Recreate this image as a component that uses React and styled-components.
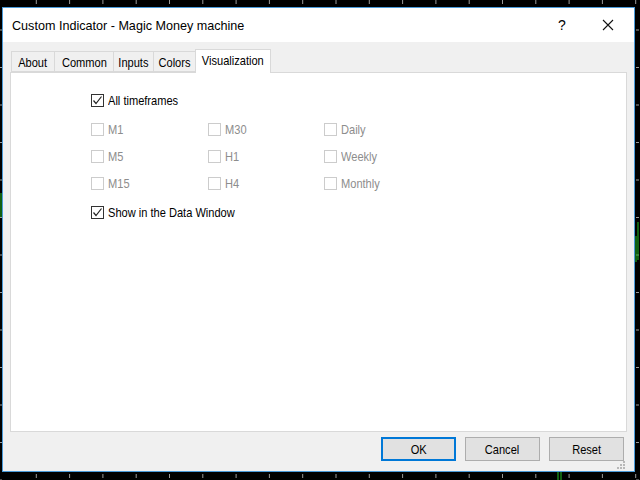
import React from "react";
import styled, { createGlobalStyle } from "styled-components";

const Global = createGlobalStyle`
  html, body { margin: 0; padding: 0; background: #000; }
  * { box-sizing: border-box; }
`;

const UI_FONT = `"Liberation Sans", Arial, sans-serif`;

const Screen = styled.div`
  position: relative;
  width: 640px;
  height: 480px;
  background: #000;
  overflow: hidden;
`;

const ChartLayer = styled.svg`
  position: absolute;
  left: 0;
  top: 0;
  width: 640px;
  height: 480px;
`;

const Dialog = styled.div`
  position: absolute;
  left: 2px;
  top: 7px;
  width: 633px;
  height: 465px;
  border: 1px solid #4a9ad8;
  background: #f0f0f0;
  display: flex;
  flex-direction: column;
`;

const TitleBar = styled.div`
  height: 34px;
  flex: none;
  background: #fff;
  display: flex;
  align-items: center;
  padding-left: 9px;
  padding-right: 3px;
`;

const Title = styled.div`
  flex: 1;
  font-family: ${UI_FONT};
  font-size: 12.6px;
  color: #000;
  padding-top: 1px;
`;

const TitleButton = styled.div`
  width: 46px;
  height: 34px;
  display: flex;
  align-items: center;
  justify-content: center;
  font-family: ${UI_FONT};
  font-size: 14px;
  color: #000;
`;

/* Narrow UI text: the reference uses a condensed face */
const Narrow = styled.span`
  display: inline-block;
  white-space: nowrap;
  font-family: ${UI_FONT};
  font-size: 13.5px;
  transform: scaleX(0.82);
  transform-origin: ${(p) => p.$origin || "center"};
`;

const Body = styled.div`
  flex: 1;
  display: flex;
  flex-direction: column;
  padding: 7px 7px 0 7px;
`;

const TabRow = styled.div`
  display: flex;
  align-items: flex-end;
  height: 23px;
  padding-left: 1px;
  position: relative;
  z-index: 1;
`;

const Tab = styled.div`
  width: ${(p) => p.$w}px;
  height: ${(p) => (p.$active ? 24 : 21)}px;
  margin-bottom: ${(p) => (p.$active ? -1 : 0)}px;
  margin-left: ${(p) => (p.$first ? 0 : -1)}px;
  border: 1px solid #d9d9d9;
  border-bottom: ${(p) => (p.$active ? "none" : "1px solid #d9d9d9")};
  background: ${(p) => (p.$active ? "#fff" : "#f0f0f0")};
  display: flex;
  justify-content: center;
  align-items: ${(p) => (p.$active ? "flex-start" : "center")};
  padding-top: ${(p) => (p.$active ? 3 : 2)}px;
  color: #000;
  position: relative;
  z-index: ${(p) => (p.$active ? 2 : 1)};
`;

const Panel = styled.div`
  height: 360px;
  flex: none;
  background: #fff;
  border: 1px solid #d9d9d9;
  padding: 14px 0 0 80px;
`;

const OptionRow = styled.label`
  height: 27px;
  display: flex;
  align-items: center;
  margin-top: ${(p) => p.$mt || 0}px;
  color: ${(p) => (p.$disabled ? "#8d8d8d" : "#000")};
`;

const Grid = styled.div`
  display: grid;
  grid-template-columns: 117px 116px 120px;
  grid-auto-rows: 27px;
  margin-top: 2px;
`;

const Box = styled.span`
  width: 13px;
  height: 13px;
  flex: none;
  border: 1px solid ${(p) => (p.$disabled ? "#cccccc" : "#333333")};
  background: #fff;
  display: flex;
  align-items: center;
  justify-content: center;
  margin-right: 4px;
`;

const Footer = styled.div`
  flex: 1;
  display: flex;
  justify-content: flex-end;
  align-items: flex-start;
  gap: 9px;
  padding: 5px 3px 0 0;
  position: relative;
`;

const Button = styled.div`
  width: 75px;
  height: 24px;
  background: #e1e1e1;
  border: ${(p) => (p.$default ? "2px solid #0078d7" : "1px solid #adadad")};
  display: flex;
  align-items: center;
  justify-content: center;
  color: #000;
`;

const Grip = styled.svg`
  position: absolute;
  right: 1px;
  bottom: 1px;
  width: 10px;
  height: 10px;
`;

function Check({ checked, disabled }) {
  return (
    <Box $disabled={disabled}>
      {checked && (
        <svg width="11" height="11" viewBox="0 0 11 11">
          <polyline
            points="1.5,5.5 4,8.5 9.5,1.5"
            fill="none"
            stroke="#222"
            strokeWidth="1.2"
          />
        </svg>
      )}
    </Box>
  );
}

function Option({ label, checked, disabled, mt }) {
  return (
    <OptionRow $disabled={disabled} $mt={mt}>
      <Check checked={checked} disabled={disabled} />
      <Narrow $origin="left center">{label}</Narrow>
    </OptionRow>
  );
}

function Chart() {
  const topTicks = [];
  for (let k = 1; k < 20; k++) topTicks.push(3 + 33.3 * k);
  const sideTicks = [];
  for (let k = 0; k < 13; k++) sideTicks.push(30 + 37.5 * k);
  return (
    <ChartLayer viewBox="0 0 640 480">
      {topTicks.map((x, i) => (
        <g key={i} stroke="#9a9a9a" strokeWidth="1">
          <line x1={x} y1="0" x2={x} y2="4" />
          <line x1={x} y1="474" x2={x} y2="478" />
        </g>
      ))}
      {sideTicks.map((y, i) => (
        <g key={i} stroke="#9a9a9a" strokeWidth="1">
          <line x1="0" y1={y} x2="2" y2={y} />
          <line x1="636" y1={y} x2="639" y2={y} />
        </g>
      ))}
      <g stroke="#22c022" strokeWidth="1">
        <line x1="1" y1="193" x2="1" y2="217" />
        <line x1="638" y1="222" x2="638" y2="260" />
        <line x1="636" y1="236" x2="636" y2="262" />
        <line x1="558" y1="472" x2="558" y2="480" />
        <line x1="561" y1="472" x2="561" y2="480" />
      </g>
    </ChartLayer>
  );
}

const TABS = [
  { label: "About", w: 44 },
  { label: "Common", w: 60 },
  { label: "Inputs", w: 41 },
  { label: "Colors", w: 43 },
  { label: "Visualization", w: 76, active: true },
];

const GRID = ["M1", "M30", "Daily", "M5", "H1", "Weekly", "M15", "H4", "Monthly"];

export default function App() {
  return (
    <Screen>
      <Global />
      <Chart />
      <Dialog>
        <TitleBar>
          <Title>Custom Indicator - Magic Money machine</Title>
          <TitleButton>?</TitleButton>
          <TitleButton>
            <svg width="12" height="12" viewBox="0 0 12 12">
              <path d="M1 1 L11 11 M11 1 L1 11" stroke="#111" strokeWidth="1.1" />
            </svg>
          </TitleButton>
        </TitleBar>
        <Body>
          <TabRow>
            {TABS.map((t, i) => (
              <Tab key={t.label} $w={t.w} $active={t.active} $first={i === 0}>
                <Narrow>{t.label}</Narrow>
              </Tab>
            ))}
          </TabRow>
          <Panel>
            <Option label="All timeframes" checked />
            <Grid>
              {GRID.map((g) => (
                <Option key={g} label={g} disabled />
              ))}
            </Grid>
            <Option label="Show in the Data Window" checked mt={2} />
          </Panel>
          <Footer>
            <Button $default><Narrow>OK</Narrow></Button>
            <Button><Narrow>Cancel</Narrow></Button>
            <Button><Narrow>Reset</Narrow></Button>
            <Grip viewBox="0 0 10 10">
              {[
                [8, 2], [8, 5], [8, 8], [5, 5], [5, 8], [2, 8],
              ].map(([x, y], i) => (
                <rect key={i} x={x - 1} y={y - 1} width="2" height="2" fill="#b8b8b8" />
              ))}
            </Grip>
          </Footer>
        </Body>
      </Dialog>
    </Screen>
  );
}
